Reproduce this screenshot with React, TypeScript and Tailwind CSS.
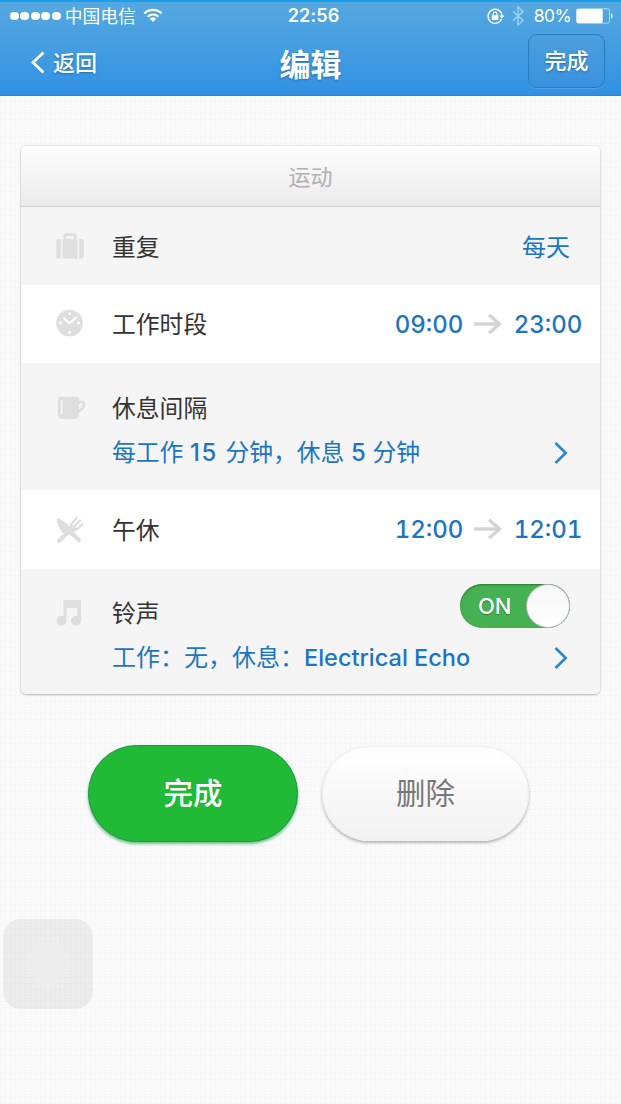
import type { ReactNode } from 'react';

function Wifi() {
  return (
    <svg width="20" height="15" viewBox="0 0 20 15" fill="none" stroke="white" strokeWidth="2.2">
      <path d="M1.3 5.4C6.3 .6 13.7 .6 18.7 5.4" />
      <path d="M4.6 8.7C7.8 5.8 12.2 5.8 15.4 8.7" />
      <path d="M10 14L6.7 10.7Q10 8 13.3 10.7Z" fill="white" stroke="none" />
    </svg>
  );
}

function RotationLock() {
  return (
    <svg width="18" height="17" viewBox="0 0 18 17" fill="none" stroke="white" strokeWidth="1.4">
      <path d="M14.6 10.8A7 7 0 1 1 15 7.6" />
      <path d="M12.4 7.4H17.4L14.9 10.6Z" fill="white" stroke="none" />
      <rect x="4.8" y="7.2" width="6.6" height="4.8" rx=".6" fill="white" stroke="none" />
      <path d="M6.3 7.5V6A1.8 1.8 0 0 1 9.900 6V7.5" strokeWidth="1.3" />
    </svg>
  );
}

function Bluetooth() {
  return (
    <svg width="12" height="20" viewBox="0 0 12 20" fill="none" stroke="#9bd0f3" strokeWidth="1.5">
      <path d="M1 5.4L11 14.4L6 19V1L11 5.6L1 14.6" />
    </svg>
  );
}

function Battery() {
  return (
    <svg width="37" height="16" viewBox="0 0 37 16">
      <rect x=".5" y=".8" width="33" height="14.4" rx="2" fill="none" stroke="#b4dcf6" />
      <rect x=".7" y="1" width="26" height="14" rx="1.5" fill="white" />
      <path d="M35 5.5C37.2 6 37.2 10 35 10.5Z" fill="white" />
    </svg>
  );
}

function Briefcase() {
  return (
    <svg width="28" height="26" viewBox="0 0 28 26" fill="#dedede">
      <path d="M7.500 6V2Q7.500 .3 9.300 .3H18.700Q20.500 .3 20.500 2V6H17.800V3H10.200V6Z" />
      <path d="M4.800 6V25.500H2.200Q.3 25.500 .3 23.500V8Q.3 6 2.200 6Z" />
      <rect x="6.500" y="6" width="15" height="19.500" />
      <path d="M23.200 6H25.800Q27.700 6 27.700 8V23.500Q27.700 25.500 25.800 25.500H23.200Z" />
    </svg>
  );
}

function Clock() {
  return (
    <svg width="28" height="28" viewBox="0 0 28 28" fill="none">
      <circle cx="13.500" cy="14" r="13.300" fill="#dedede" />
      <path d="M7.500 8.700L13.400 14.200L20.800 8" stroke="white" strokeWidth="2.200" />
      <g fill="white">
        <circle cx="13.500" cy="4.600" r="1.500" />
        <circle cx="4.300" cy="14" r="1.500" />
        <circle cx="22.700" cy="14" r="1.500" />
        <circle cx="13.500" cy="23.200" r="1.500" />
      </g>
    </svg>
  );
}

function Mug() {
  return (
    <svg width="30" height="24" viewBox="0 0 30 24" fill="none">
      <path d="M3.500 .8H21Q23 .8 23 2.800V18.500Q23 23 18.500 23H7Q2 23 2 18V2.500Q2 .8 3.500 .8Z" fill="#dedede" />
      <path d="M5.700 4V18" stroke="#f5f5f5" strokeWidth="2" />
      <path d="M22.500 7C25 5 28 5.500 28 9C28 12 25.500 13.500 22.500 15.500" stroke="#dedede" strokeWidth="2.600" />
    </svg>
  );
}

function Cutlery() {
  return (
    <svg width="28" height="28" viewBox="0 0 28 28" fill="none" stroke="#dedede" strokeLinecap="round">
      <path d="M3 25L15 13.500" strokeWidth="4" />
      <path d="M15 8.500L21 1.500M18 10.500L24 4.500M20 14L26.500 8.500" strokeWidth="2.200" />
      <path d="M15.500 7.500L12.500 12.500L15.500 16.500L20.500 15L22 12.500L17.500 10.500Z" fill="#dedede" stroke="none" />
      <path d="M.7 2C8 4 14 10 16.500 14.500L24.800 23.200Q25.500 25.200 23 26.800L15.500 20L12.500 18.800L9 19.500Q1 12 .7 2Z" fill="#dedede" stroke="none" />
    </svg>
  );
}

function Music() {
  return (
    <svg width="28" height="28" viewBox="0 0 28 28" fill="#dedede">
      <path d="M7.500 2Q7.500 1 8.500 1H24Q25 1 25 2V22H21.500V9H10.500V22H7.500Z" />
      <circle cx="5.500" cy="21.800" r="5" />
      <circle cx="20" cy="21.800" r="5" />
    </svg>
  );
}

function Arrow() {
  return (
    <svg width="28" height="20" viewBox="0 0 28 20" fill="none" stroke="#d4d4d4" strokeWidth="3.400">
      <path d="M0 10H25" />
      <path d="M15 .8L25.500 10L15 19.200" strokeWidth="3.400" />
    </svg>
  );
}

function Chevron() {
  return (
    <svg width="14" height="22" viewBox="0 0 14 22" fill="none" stroke="#2c86cd" strokeWidth="2.600">
      <path d="M1.500 1L11.700 11L1.500 21" />
    </svg>
  );
}

function TimeRange({ from, to }: { from: string; to: string }) {
  return (
    <div className="flex items-center text-[24px] font-medium leading-6 tabular-nums text-[#1c75c4]">
      <span className="w-[76px] pt-px text-center">{from}</span>
      <span className="-mt-px ml-[7px] mr-2"><Arrow /></span>
      <span className="w-[76px] pt-px text-center">{to}</span>
    </div>
  );
}

function Label({ children }: { children: ReactNode }) {
  return <span className="text-[23.800px] leading-6 text-[#333]">{children}</span>;
}

const row = 'flex pl-[35px]';

export default function App() {
  return (
    <div className="relative flex h-[1104px] w-[621px] flex-col overflow-hidden bg-[#fafafa] bg-[image:repeating-linear-gradient(0deg,rgba(0,0,0,0.01)_0px,rgba(0,0,0,0.01)_1px,transparent_1px,transparent_6px),repeating-linear-gradient(90deg,rgba(0,0,0,0.01)_0px,rgba(0,0,0,0.01)_1px,transparent_1px,transparent_5px)] font-['Inter','Noto_Sans_CJK_SC',sans-serif]">
      <header className="h-24 shrink-0 border-b border-t-2 border-b-[#3583c8] border-t-[#18a0ec] bg-linear-to-b from-[#56a8df] to-[#3091e3] text-white">
        <div className="flex h-7 items-center pl-[10px] pr-[8px] text-[17px] leading-none">
          <div className="flex flex-1 items-center">
            <div className="flex gap-[1.800px]">
              {[0, 1, 2, 3, 4].map((i) => <i key={i} className="size-[8.700px] rounded-full bg-white" />)}
            </div>
            <span className="ml-[4px] pt-px text-[17.800px]">中国电信</span>
            <span className="ml-[7px]"><Wifi /></span>
          </div>
          <span className="ml-1 text-[18px] font-semibold tracking-[0.1px]">22:56</span>
          <div className="flex flex-1 items-center justify-end">
            <RotationLock />
            <span className="ml-[7px]"><Bluetooth /></span>
            <span className="ml-[10px] mr-[5px] text-[17.500px] tracking-[-0.6px]">80%</span>
            <Battery />
          </div>
        </div>
        <div className="flex h-[65px] items-center px-4 [text-shadow:0_1px_2px_rgba(0,50,100,0.4)]">
          <div className="flex flex-1 basis-0 items-center">
            <svg className="ml-[15px]" width="14" height="23" viewBox="0 0 14 23" fill="none" stroke="white" strokeWidth="2.800"><path d="M12.500 1.500L2 11.500L12.500 21.500" /></svg>
            <span className="ml-[8px] text-[22px] font-medium leading-none">返回</span>
          </div>
          <h1 className="mt-[3px] text-[31px] font-bold leading-none">编辑</h1>
          <div className="flex flex-1 basis-0 justify-end">
            <button className="-mt-[3px] h-[54px] w-[77px] rounded-[9px] border border-[#237ebf] bg-linear-to-b from-[#4c9fdd] to-[#3992df] pb-px text-[22px] font-medium leading-none shadow-[0_1px_0_rgba(255,255,255,0.15)] [text-shadow:0_1px_2px_rgba(0,50,100,0.4)]">完成</button>
          </div>
        </div>
      </header>

      <main className="px-[21px] pt-[50px]">
        <section className="overflow-hidden rounded-[5px] shadow-[0_0_2px_rgba(0,0,0,0.18),0_1px_2px_rgba(0,0,0,0.22)]">
          <h2 className="flex h-[61px] items-center justify-center border-b border-[#cfcfcf] bg-linear-to-b from-[#fefefe] to-[#ebebeb] pt-px text-[22px] leading-none text-[#b0b0b0]">运动</h2>
          <div className={`${row} h-[78px] items-center bg-[#f5f5f5] pr-[30px]`}>
            <span className="-mt-px w-14"><Briefcase /></span>
            <span className="flex flex-1 pt-[3px]"><Label>重复</Label></span>
            <span className="mt-[3px] text-[24px] leading-6 text-[#1c75c4]">每天</span>
          </div>
          <div className={`${row} h-[78px] items-center bg-white pr-[14px]`}>
            <span className="-mt-[3px] w-14"><Clock /></span>
            <span className="flex flex-1 pt-[2px]"><Label>工作时段</Label></span>
            <TimeRange from="09:00" to="23:00" />
          </div>
          <div className={`${row} h-[127px] bg-[#f5f5f5] pr-[32px] pt-[33px]`}>
            <span className="w-14 shrink-0"><Mug /></span>
            <div className="flex min-w-0 flex-1 flex-col items-start gap-[20px] pt-px">
              <Label>休息间隔</Label>
              <span className="whitespace-nowrap text-[23.800px] leading-6 text-[#1c75c4]">每工作 <b className="mr-px font-medium tracking-[1.500px]">15</b> 分钟，休息 <b className="font-medium">5</b> 分钟</span>
            </div>
            <span className="mt-[46px]"><Chevron /></span>
          </div>
          <div className={`${row} h-[79px] items-center bg-white pr-[14px]`}>
            <span className="w-14"><Cutlery /></span>
            <span className="flex flex-1 pt-[2px]"><Label>午休</Label></span>
            <TimeRange from="12:00" to="12:01" />
          </div>
          <div className={`${row} h-[125px] bg-[#f5f5f5] pt-[15px]`}>
            <span className="mt-[15px] w-14 shrink-0"><Music /></span>
            <div className="mt-[18px] flex min-w-0 flex-1 flex-col items-start gap-[20px]">
              <Label>铃声</Label>
              <span className="whitespace-nowrap text-[24px] leading-6 text-[#1c75c4]">工作：无，休息：<b className="text-[23.500px] font-medium">Electrical Echo</b></span>
            </div>
            <div className="mr-[30px] flex w-[110px] shrink-0 flex-col items-end">
              <div className="flex h-11 w-[110px] items-center justify-between rounded-full bg-[#45b153] pl-[18px] shadow-[inset_0_1px_2px_#28752f]">
                <span className="text-[22px] font-medium leading-none text-white [text-shadow:0_1px_1px_rgba(0,70,0,0.5)]">ON</span>
                <i className="size-11 rounded-full border border-[#b8b8b8] bg-linear-to-b from-[#f7f7f7] to-white" />
              </div>
              <span className="mr-[2px] mt-[19px]"><Chevron /></span>
            </div>
          </div>
        </section>
        <div className="mt-[51px] flex gap-6 pl-[67px] text-[29.500px] leading-none">
          <button className="h-[97px] w-[210px] rounded-[49px] border border-[#239447] bg-[#21ba36] font-medium text-white shadow-[0_2px_3px_rgba(20,150,70,0.6)]">完成</button>
          <button className="mt-px h-[95px] w-[207px] rounded-[48px] border border-[#eeeeee] bg-linear-to-b from-white to-[#f3f2f2] text-[#777] shadow-[0_2px_3px_rgba(0,0,0,0.28)]">删除</button>
        </div>
      </main>
      <div className="absolute left-[3px] top-[919px] flex size-[90px] items-center justify-center rounded-[18px] bg-black/[0.055]">
        <i className="size-11 rounded-full bg-white/15 shadow-[0_0_6px_6px_rgba(255,255,255,0.08)]" />
      </div>
    </div>
  );
}
